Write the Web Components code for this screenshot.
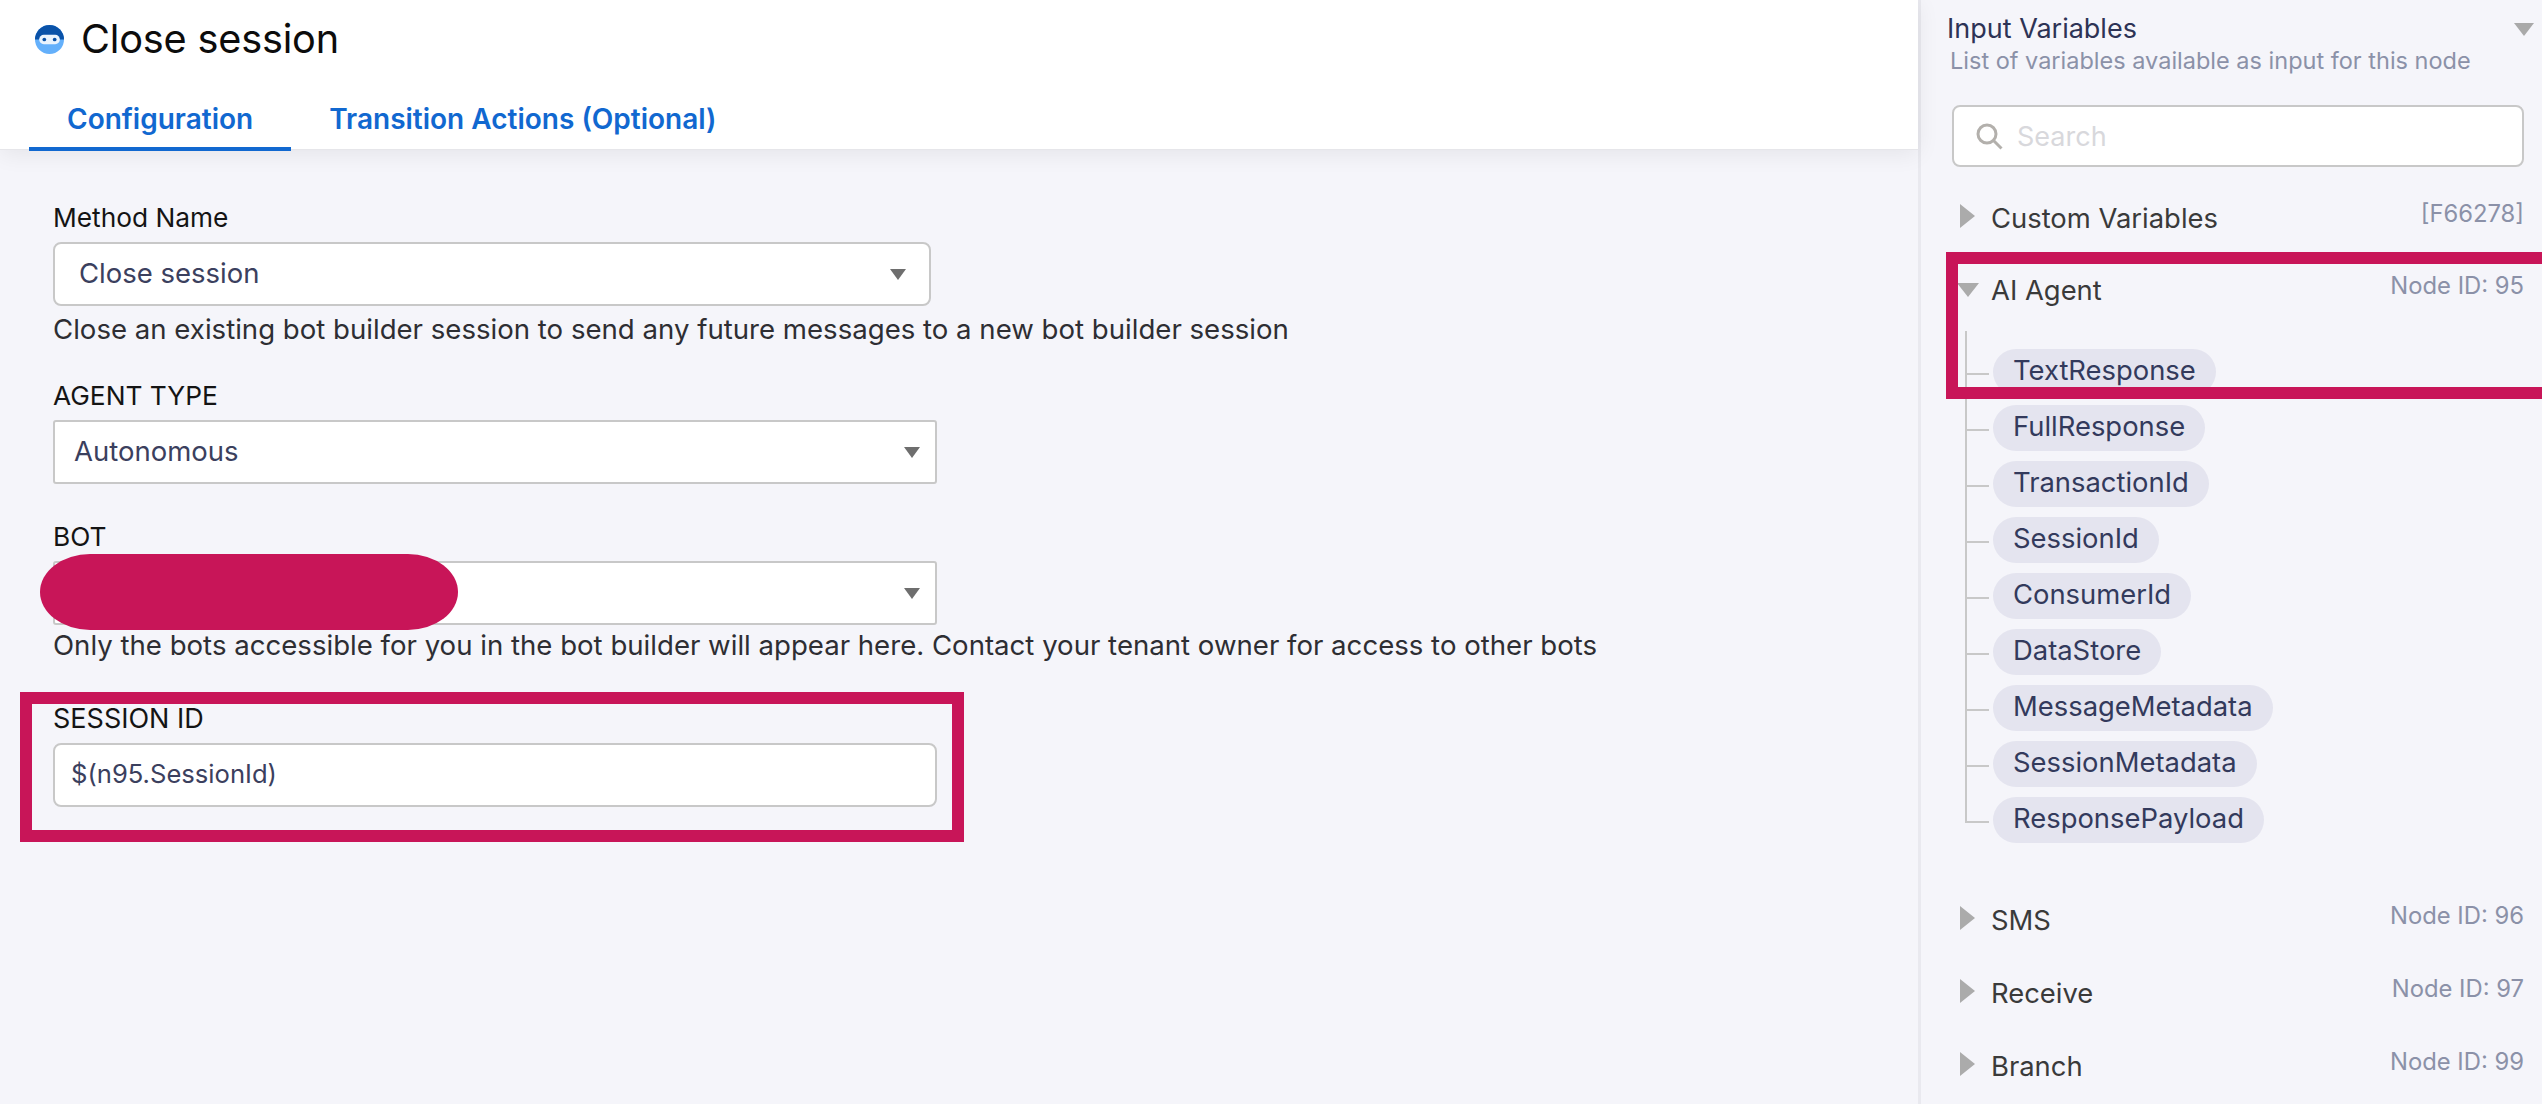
<!DOCTYPE html>
<html lang="en">
<head>
<meta charset="utf-8">
<title>Close session</title>
<style>
  html, body { margin: 0; height: 100%; background: #f5f5fa; }
  body { font-family: Inter, 'Liberation Sans', sans-serif; overflow: hidden; }
</style>
</head>
<body>
<app-page>
  <node-header slot="main" title="Close session">
    <tab-item active>Configuration</tab-item>
    <tab-item>Transition Actions (Optional)</tab-item>
  </node-header>

  <config-form slot="main">
    <form-field label="Method Name" value="Close session" kind="select" rounded style="--control-width:878px;--value-left:24px;--arrow-right:23px;--help-top:6px;">
      Close an existing bot builder session to send any future messages to a new bot builder session
    </form-field>
    <form-field label="AGENT TYPE" value="Autonomous" kind="select" style="margin-top:32px"></form-field>
    <form-field label="BOT" value="" kind="select" style="margin-top:35px;--help-top:3px;">
      Only the bots accessible for you in the bot builder will appear here. Contact your tenant owner for access to other bots
      <mark-blob slot="over"></mark-blob>
    </form-field>
    <form-field label="SESSION ID" value="$(n95.SessionId)" kind="input" rounded style="margin-top:39px;--label-size:27px;--value-size:25.6px;">
      <mark-box slot="over" style="--l:-33px;--t:-9px;--w:944px;--h:150px;"></mark-box>
    </form-field>
  </config-form>

  <var-panel slot="side">
    <var-group name="Custom Variables" meta="[F66278]"></var-group>
    <var-group name="AI Agent" meta="Node ID: 95" open>
      <var-chip>TextResponse</var-chip>
      <var-chip>FullResponse</var-chip>
      <var-chip>TransactionId</var-chip>
      <var-chip>SessionId</var-chip>
      <var-chip>ConsumerId</var-chip>
      <var-chip>DataStore</var-chip>
      <var-chip>MessageMetadata</var-chip>
      <var-chip>SessionMetadata</var-chip>
      <var-chip>ResponsePayload</var-chip>
      <mark-box slot="over" style="--l:-6px;--t:-21px;--w:620px;--h:147px;"></mark-box>
    </var-group>
    <var-group name="SMS" meta="Node ID: 96"></var-group>
    <var-group name="Receive" meta="Node ID: 97" style="margin-top:1px"></var-group>
    <var-group name="Branch" meta="Node ID: 99" style="margin-top:1px"></var-group>
  </var-panel>
</app-page>

<script>
const define = (name, css, html) => {
	customElements.define(name, class extends HTMLElement {
		constructor() {
			super()
			this.attachShadow({ mode: 'open' })
			const attr = k => (this.getAttribute(k) || '').replace(/&/g, '&amp;').replace(/</g, '&lt;')
			this.shadowRoot.innerHTML = `<style>${css}</style>${html(attr, this)}`
		}
	})
}

define('app-page', `
  :host { display: flex; width: 2542px; height: 1104px; overflow: hidden; background: #f5f5fa; }
  .main { width: 1918px; flex: none; display: flex; flex-direction: column; }
  .side { flex: 1; border-left: 3px solid #e9e9ef; min-width: 0; }
`, () => `
  <div class="main"><slot name="main"></slot></div>
  <div class="side"><slot name="side"></slot></div>
`)

define('node-header', `
  :host { display: block; height: 150px; background: #fff; box-sizing: border-box; padding: 0 0 0 29px; border-bottom: 1px solid #e6e6ea; box-shadow: 0 4px 22px rgba(0,0,0,.07); position: relative; }
  .top { display: flex; align-items: center; gap: 17px; height: 78px; padding-left: 6px; }
  svg { width: 29px; height: 29px; flex: none; }
  h1 { margin: 0; font-size: 39.7px; font-weight: 400; color: #0c0c0c; letter-spacing: -.2px; }
  .tabs { display: flex; gap: 0; height: 72px; }
`, attr => `
  <div class="top">
    <svg viewBox="0 0 28 28">
      <circle cx="14" cy="14" r="14" fill="#64b0fb"/>
      <path d="M0 14a14 14 0 0 1 28 0z" fill="#0a52a8"/>
      <rect x="4" y="9.5" width="20" height="9" rx="4.5" fill="#eaf3fd"/>
      <circle cx="9" cy="14" r="1.8" fill="#0a52a8"/>
      <circle cx="19" cy="14" r="1.8" fill="#0a52a8"/>
    </svg>
    <h1>${attr('title')}</h1>
  </div>
  <div class="tabs"><slot></slot></div>
`)

define('tab-item', `
  :host { display: block; box-sizing: border-box; height: 73px; padding: 24px 38px 0 38px; font-size: 28px; font-weight: 600; color: #1168d0; line-height: 34px; white-space: nowrap; }
  :host([active]) { border-bottom: 4px solid #1168d0; }
`, () => `<slot></slot>`)

define('config-form', `
  :host { display: block; padding: 50px 0 0 53px; }
`, () => `<slot></slot>`)

define('form-field', `
  :host { display: block; position: relative; --control-width: 884px; --value-left: 19px; --arrow-right: 15px; --help-top: 6px; --label-size: 26.3px; --value-size: 27.5px; }
  .label { font-size: var(--label-size); line-height: 34px; padding-top: 1px; color: #141414; margin-bottom: 7px; }
  .control { box-sizing: border-box; width: var(--control-width); height: 64px; background: #fff; border: 2px solid #c8c8c8; border-radius: 3px; display: flex; align-items: center; padding: 0 var(--arrow-right) 0 var(--value-left); color: #3b405e; font-size: var(--value-size); }
  :host([rounded]) .control { border-radius: 8px; }
  :host([kind="input"]) .control { padding-left: 16px; }
  .value { flex: 1; margin-top: -3px; }
  .arrow { width: 0; height: 0; border-left: 8px solid transparent; border-right: 8px solid transparent; border-top: 11px solid #6e6e6e; }
  :host([kind="input"]) .arrow { display: none; }
  .help { font-size: 27.6px; line-height: 34px; color: #2e2e33; margin-top: var(--help-top); white-space: nowrap; }
`, attr => `
  <div class="label">${attr('label')}</div>
  <div class="control"><span class="value">${attr('value')}</span><span class="arrow"></span></div>
  <div class="help"><slot></slot></div>
  <slot name="over"></slot>
`)

// red annotations drawn on top of the shot
define('mark-blob', `
  :host { position: absolute; left: -13px; top: 35px; width: 418px; height: 76px; background: #c81558; border-radius: 50px / 38px; z-index: 5; }
`, () => ``)

define('mark-box', `
  :host { position: absolute; left: var(--l); top: var(--t); width: var(--w); height: var(--h); box-sizing: border-box; border: 12px solid #c81558; z-index: 5; pointer-events: none; }
`, () => ``)

define('var-panel', `
  :host { display: block; padding: 18px 18px 0 26px; position: relative; }
  .title { font-size: 27px; line-height: 22px; color: #2d3355; }
  .sub { font-size: 23.5px; line-height: 28px; color: #8b91a8; margin: 7px 0 0 3px; white-space: nowrap; }
  .toggle { position: absolute; right: 8px; top: 23px; width: 0; height: 0; border-left: 10px solid transparent; border-right: 10px solid transparent; border-top: 13px solid #a9a9a9; }
  .search { box-sizing: border-box; width: 572px; height: 62px; margin: 30px 0 0 5px; border: 2px solid #c8c8c8; border-radius: 8px; background: #fff; display: flex; align-items: center; gap: 14px; padding-left: 22px; font-size: 27px; color: #d8d8dc; }
  .search svg { width: 27px; height: 27px; flex: none; }
  .list { margin-top: 34px; }
`, () => `
  <div class="title">Input Variables</div>
  <div class="sub">List of variables available as input for this node</div>
  <span class="toggle"></span>
  <div class="search">
    <svg viewBox="0 0 27 27" fill="none" stroke="#b3b0ac" stroke-width="3"><circle cx="11" cy="11" r="9"/><path d="M17.5 17.5l8 8"/></svg>
    <span>Search</span>
  </div>
  <div class="list"><slot></slot></div>
`)

define('var-group', `
  :host { display: block; position: relative; width: 572px; margin-left: 5px; }
  .row { display: flex; align-items: flex-start; height: 72px; position: relative; }
  .tri { position: absolute; left: 8px; top: 3px; width: 0; height: 0; border-top: 12px solid transparent; border-bottom: 12px solid transparent; border-left: 15px solid #ababab; }
  :host([open]) .tri { left: 5px; top: 10px; border-left: 11px solid transparent; border-right: 11px solid transparent; border-top: 14px solid #ababab; border-bottom: 0; }
  .name { margin-left: 39px; font-size: 27.4px; line-height: 34px; color: #3a3a3a; }
  .meta { margin-left: auto; font-size: 23.8px; line-height: 28px; color: #8b91a8; margin-top: -1px; }
  .tree { margin: -14px 0 0 13px; padding: 18px 0 0 0; border-left: 2px solid #c8c8c8; height: 492px; box-sizing: border-box; }
  .after { height: 80px; }
  :host(:not([open])) .tree, :host(:not([open])) .after { display: none; }
`, attr => `
  <div class="row"><span class="tri"></span><span class="name">${attr('name')}</span><span class="meta">${attr('meta')}</span></div>
  <div class="tree"><slot></slot></div>
  <div class="after"></div>
  <slot name="over"></slot>
`)

define('var-chip', `
  :host { display: flex; align-items: flex-start; height: 46px; margin-bottom: 10px; }
  .tick { width: 22px; height: 2px; background: #c8c8c8; margin-top: 24px; margin-right: 4px; flex: none; }
  .chip { box-sizing: border-box; height: 46px; border-radius: 23px; background: #e4e4ef; color: #333a5c; font-size: 27.4px; line-height: 42px; padding: 0 20px; white-space: nowrap; }
`, () => `<span class="tick"></span><span class="chip"><slot></slot></span>`)
</script>
</body>
</html>
